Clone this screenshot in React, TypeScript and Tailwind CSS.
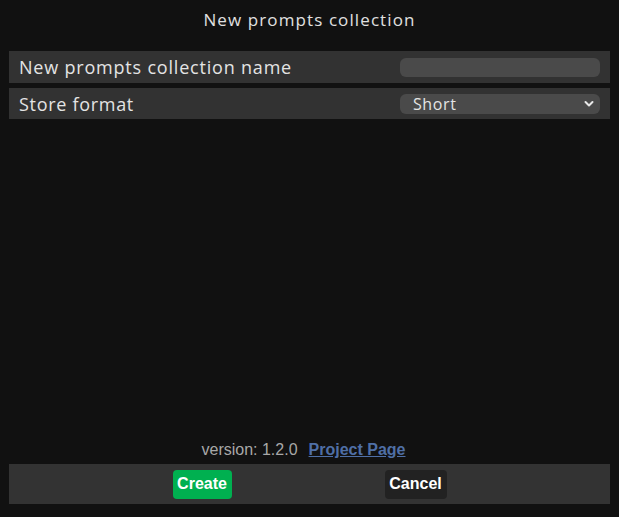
import { useState } from "react";

const labelFont = { fontFamily: '"Open Sans", "Noto Sans", sans-serif' };

function Chevron() {
  return (
    <svg
      className="pointer-events-none absolute right-[6px] top-1/2 -translate-y-1/2"
      width="10"
      height="7"
      viewBox="0 0 10 7"
      fill="none"
    >
      <path d="M1.5 1.5 L5 5 L8.5 1.5" stroke="#e8e8e8" strokeWidth="2" strokeLinecap="round" strokeLinejoin="round" />
    </svg>
  );
}

export default function App() {
  const [name, setName] = useState("");
  const [format, setFormat] = useState("Short");

  return (
    <div className="flex h-[517px] w-[619px] flex-col bg-[#111111] text-[#dddddd]" style={labelFont}>
      <h1 className="mt-[8px] h-[24px] text-center text-[17px] leading-[24px] tracking-[1.1px] text-[#e0e0e0]">
        New prompts collection
      </h1>

      <div className="mt-[19px] flex flex-col gap-[5px] px-[9px]">
        <div className="flex h-[32px] items-center justify-between bg-[#323232] px-[10px]">
          <span className="text-[18px] leading-none tracking-[0.8px] text-[#e4e4e4]">New prompts collection name</span>
          <input
            className="h-[19px] w-[200px] rounded-[6px] bg-[#4a4a4a] px-[8px] text-[16px] text-[#e4e4e4] outline-none"
            value={name}
            onChange={(event) => setName(event.target.value)}
          />
        </div>
        <div className="flex h-[31px] items-center justify-between bg-[#323232] px-[10px]">
          <span className="text-[18px] leading-none tracking-[0.7px] text-[#e4e4e4]">Store format</span>
          <div className="relative">
            <select
              className="h-[20px] w-[200px] appearance-none rounded-[6px] bg-[#4a4a4a] pl-[13px] text-[16px] leading-[20px] tracking-[0.6px] text-[#e4e4e4] outline-none"
              value={format}
              onChange={(event) => setFormat(event.target.value)}
            >
              <option>Short</option>
              <option>Full</option>
            </select>
            <Chevron />
          </div>
        </div>
      </div>

      <div className="flex-1" />

      <p
        className="mb-[4px] flex h-[20px] items-center justify-center gap-[11px] pr-[12px] text-[16px] text-[#a8a8a8]"
        style={{ fontFamily: '"Liberation Sans", Arial, sans-serif' }}
      >
        <span>version: 1.2.0</span>
        <a href="#" className="font-bold text-[#4f6fa6] underline">
          Project Page
        </a>
      </p>

      <div
        className="mx-[9px] mb-[13px] flex h-[40px] items-center justify-center gap-[153px] bg-[#333333]"
        style={{ fontFamily: '"Liberation Sans", Arial, sans-serif' }}
      >
        <button type="button" className="h-[29px] w-[59px] rounded-[4px] bg-[#00b050] text-[16px] font-bold text-white">
          Create
        </button>
        <button type="button" className="h-[29px] w-[62px] rounded-[4px] bg-[#222222] text-[16px] font-bold text-white">
          Cancel
        </button>
      </div>
    </div>
  );
}
